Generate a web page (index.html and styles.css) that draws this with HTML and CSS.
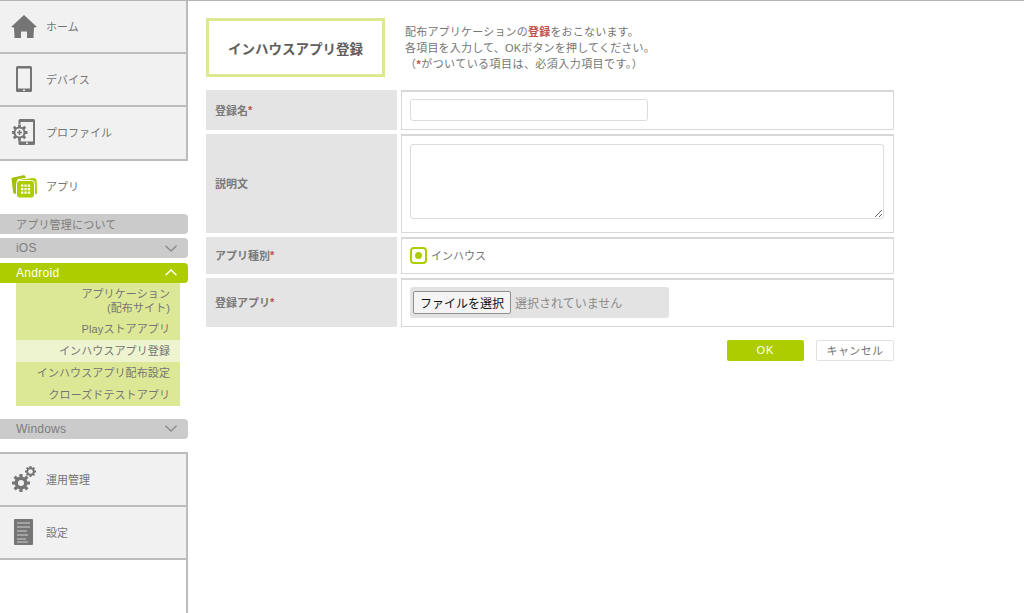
FILE: index.html
```html
<!DOCTYPE html>
<html lang="ja">
<head>
    <meta charset="UTF-8">
    <meta name="viewport" content="width=device-width, initial-scale=1.0">
    <title>インハウスアプリ登録</title>
    <link rel="stylesheet" href="styles.css">
</head>
<body>
    <div class="page">
        <!-- Sidebar -->
        <nav class="sidebar">
            <a class="nav-item">
                <span class="nav-icon">
                    <svg width="26" height="23" viewBox="0 0 26 23"><path fill="#757575" d="M13 0 L26 12 L23 12.5 L22.5 22.5 Q22.5 23 22 23 L16 23 L16 16.5 L10 16.5 L10 23 L4 23 Q3.5 23 3.5 22.5 L3 12.5 L0 12 Z"/></svg>
                </span>
                <span>ホーム</span>
            </a>
            <a class="nav-item">
                <span class="nav-icon">
                    <svg width="16" height="26" viewBox="0 0 16 26"><path fill="#757575" fill-rule="evenodd" d="M1.5 0 H14.5 Q16 0 16 1.5 V24.5 Q16 26 14.5 26 H1.5 Q0 26 0 24.5 V1.5 Q0 0 1.5 0 Z M2 2.5 V22.5 H14 V2.5 Z"/><circle cx="8" cy="24.3" r="1" fill="#f1f1f1"/></svg>
                </span>
                <span>デバイス</span>
            </a>
            <a class="nav-item">
                <span class="nav-icon">
                    <svg class="nudge-left" width="23" height="26" viewBox="0 0 23 26">
                        <path fill="#757575" fill-rule="evenodd" d="M8 0 H21.5 Q23 0 23 1.5 V24.5 Q23 26 21.5 26 H8 Q6.5 26 6.5 24.5 V21 H8.5 V22.5 H21 V3 H8.5 V5 H6.5 V1.5 Q6.5 0 8 0 Z"/>
                        <circle cx="15" cy="24.3" r="1" fill="#f1f1f1"/>
                        <circle cx="7.5" cy="13.5" r="6" fill="#757575"/>
                        <path stroke="#757575" stroke-width="2.8" d="M7.5 5.5 V21.5 M-0.5 13.5 H15.5 M1.8 7.8 L13.2 19.2 M13.2 7.8 L1.8 19.2"/>
                        <circle cx="7.5" cy="13.5" r="4" fill="#f1f1f1"/>
                        <path stroke="#757575" stroke-width="1.5" d="M7.5 11 V16 M5 13.5 H10"/>
                    </svg>
                </span>
                <span>プロファイル</span>
            </a>
            <a class="nav-item nav-item-active">
                <span class="nav-icon">
                    <svg width="27" height="23" viewBox="0 0 27 23">
                        <path fill="#a3bf0a" d="M0.5 3 L12 0.3 Q14 0 14.5 1.5 L15 3 L6 5 L5.5 19 L3 18.5 Q2 18 2 16.5 Z"/>
                        <path fill="#aecd00" stroke="#fff" d="M7 4.5 L22 2.5 Q25.5 2.2 26 5 L26.5 17.5 Q26.500 20 24 20 L8 21 Z"/>
                        <rect x="5.5" y="5.5" width="18" height="17.5" rx="3" fill="#aecd00" stroke="#fff"/>
                        <path fill="#fff" d="M10 9.5 h2.3 v2.3 h-2.3 z M13.4 9.5 h2.3 v2.3 h-2.3 z M16.8 9.5 h2.3 v2.3 h-2.3 z M10 13 h2.3 v2.3 h-2.3 z M13.4 13 h2.3 v2.3 h-2.3 z M16.8 13 h2.3 v2.3 h-2.3 z M10 16.5 h2.3 v2.3 h-2.3 z M13.4 16.5 h2.3 v2.3 h-2.3 z M16.8 16.5 h2.3 v2.3 h-2.3 z"/>
                    </svg>
                </span>
                <span>アプリ</span>
            </a>

            <div class="sub-nav">
                <a class="sub-bar sub-bar-about">アプリ管理について</a>
                <a class="sub-bar">iOS
                    <svg class="chevron" width="12" height="7" viewBox="0 0 12 7"><path fill="none" stroke="#8a8a8a" stroke-width="1.3" d="M0.5 0.7 L6 6 L11.5 0.7"/></svg>
                </a>
                <div class="platform-open">
                    <a class="sub-bar sub-bar-on">Android
                        <svg class="chevron" width="12" height="7" viewBox="0 0 12 7"><path fill="none" stroke="#fff" stroke-width="1.5" d="M0.5 6.3 L6 1 L11.5 6.3"/></svg>
                    </a>
                    <ul class="app-menu">
                        <li class="app-menu-tall">アプリケーション<br>(配布サイト)</li>
                        <li>Playストアアプリ</li>
                        <li class="current">インハウスアプリ登録</li>
                        <li>インハウスアプリ配布設定</li>
                        <li>クローズドテストアプリ</li>
                    </ul>
                </div>
                <a class="sub-bar">Windows
                    <svg class="chevron" width="12" height="7" viewBox="0 0 12 7"><path fill="none" stroke="#8a8a8a" stroke-width="1.3" d="M0.5 0.7 L6 6 L11.5 0.7"/></svg>
                </a>
            </div>

            <div class="nav-lower">
                <a class="nav-item">
                    <span class="nav-icon">
                        <svg width="24" height="26" viewBox="0 0 24 26">
                            <circle cx="9" cy="17" r="6.5" fill="#757575"/>
                            <path stroke="#757575" stroke-width="3.2" d="M9 8 V26 M0 17 H18 M2.6 10.6 L15.4 23.4 M15.4 10.6 L2.6 23.4"/>
                            <circle cx="9" cy="17" r="3" fill="#f1f1f1"/>
                            <circle cx="18.5" cy="5.5" r="4.3" fill="#757575"/>
                            <path stroke="#757575" stroke-width="2" d="M18.5 0 V11 M13 5.5 H24 M14.6 1.6 L22.4 9.4 M22.4 1.6 L14.6 9.4"/>
                            <circle cx="18.5" cy="5.5" r="2.3" fill="#f1f1f1"/>
                        </svg>
                    </span>
                    <span>運用管理</span>
                </a>
                <a class="nav-item">
                    <span class="nav-icon">
                        <svg class="nudge-left" width="19" height="26" viewBox="0 0 19 26">
                            <rect width="19" height="26" rx="1" fill="#757575"/>
                            <path stroke="#d2d2d2" stroke-width="1.2" d="M3 4 H16 M3 8 H16 M3 12 H13 M3 16 H14 M3 20 H12 M3 23 H14"/>
                        </svg>
                    </span>
                    <span>設定</span>
                </a>
            </div>
            <div class="sidebar-rest"></div>
        </nav>

        <!-- Main -->
        <main class="content">
            <header class="page-head">
                <h1 class="page-title">インハウスアプリ登録</h1>
                <p class="page-desc">
                    配布アプリケーションの<b class="req">登録</b>をおこないます。<br>
                    各項目を入力して、OKボタンを押してください。<br>
                    <span class="note">（<b class="req">*</b>がついている項目は、必須入力項目です。）</span>
                </p>
            </header>

            <form class="entry-form">
                <div class="row row-name">
                    <div class="row-label">登録名<b class="req">*</b></div>
                    <div class="row-value"><input class="text-input" type="text"></div>
                </div>
                <div class="row row-desc">
                    <div class="row-label">説明文</div>
                    <div class="row-value"><textarea class="text-area"></textarea></div>
                </div>
                <div class="row row-kind">
                    <div class="row-label">アプリ種別<b class="req">*</b></div>
                    <div class="row-value kind-value">
                        <span class="radio"><span class="radio-dot"></span></span>
                        <span>インハウス</span>
                    </div>
                </div>
                <div class="row row-file">
                    <div class="row-label">登録アプリ<b class="req">*</b></div>
                    <div class="row-value">
                        <div class="file-box">
                            <button class="file-btn" type="button">ファイルを選択</button>
                            <span class="file-none">選択されていません</span>
                        </div>
                    </div>
                </div>
                <div class="actions">
                    <button class="btn btn-ok" type="button">OK</button>
                    <button class="btn btn-cancel" type="button">キャンセル</button>
                </div>
            </form>
        </main>
    </div>
</body>
</html>
```

FILE: styles.css
```css
/* Reset */
html, body {
    margin: 0;
    padding: 0;
    height: 100%;
    overflow: hidden;
}

body {
    font-family: "Liberation Sans", "Noto Sans CJK JP", sans-serif;
    font-size: 11px;
    color: #757575;
    background: #fff;
}

.page {
    display: flex;
    height: 100%;
    box-sizing: border-box;
    border-top: 1px solid #b4b4b4;
}

/* Sidebar */
.sidebar {
    width: 188px;
    flex: none;
    display: flex;
    flex-direction: column;
}

.nav-item {
    display: flex;
    align-items: center;
    height: 53.2px;
    box-sizing: border-box;
    padding-bottom: 1px;
    background: #f1f1f1;
    border-bottom: 2px solid #bcbcbc;
    border-right: 2px solid #bcbcbc;
    color: #757575;
    font-size: 11px;
}

.nav-icon {
    display: flex;
    justify-content: center;
    align-items: center;
    width: 46px;
    flex: none;
    padding-left: 2px;
    box-sizing: border-box;
}

.nudge-left {
    margin-right: 2px;
}

.nav-item-active {
    background: #fff;
    border: 0;
    height: 52px;
}

.sub-nav {
    display: flex;
    flex-direction: column;
    gap: 4.5px;
    margin-top: 1px;
}

.sub-bar {
    display: flex;
    justify-content: space-between;
    align-items: center;
    height: 20px;
    padding: 0 11px 0 16px;
    background: #cbcbcb;
    border-radius: 0 4px 4px 0;
    color: #7d7d7d;
    font-size: 12px;
    letter-spacing: 0.2px;
}

.sub-nav .sub-bar-about {
    font-size: 11px;
}

.sub-bar-on {
    background: #aecd00;
    color: #fff;
    letter-spacing: 0.3px;
}

.platform-open {
    margin-bottom: 8.5px;
}

.app-menu {
    list-style: none;
    margin: 0 8px 0 16px;
    padding: 0;
    background: #dde897;
}

.app-menu li {
    height: 22px;
    line-height: 22px;
    padding-right: 10px;
    text-align: right;
    color: #757575;
    font-size: 11px;
    letter-spacing: 0.1px;
}

.app-menu .app-menu-tall {
    height: 35px;
    line-height: 14px;
    padding-top: 4px;
    box-sizing: border-box;
}

.app-menu .current {
    background: #eef4cf;
}

.nav-lower {
    margin-top: 13px;
    border-top: 2px solid #bcbcbc;
}

.sidebar-rest {
    flex: 1;
    border-right: 2px solid #bcbcbc;
}

/* Main */
.content {
    width: 688px;
    padding: 17px 0 0 18px;
}

.page-head {
    display: flex;
    gap: 20px;
    margin-bottom: 13px;
}

.page-title {
    width: 179px;
    height: 59px;
    flex: none;
    margin: 0;
    box-sizing: border-box;
    border: 3px solid #dde88f;
    display: flex;
    justify-content: center;
    align-items: center;
    font-size: 13.5px;
    font-weight: bold;
    color: #5e5e5e;
}

.page-desc {
    margin: 6px 0 0;
    font-size: 11px;
    line-height: 16px;
    letter-spacing: 0.2px;
}

.req {
    color: #c0504d;
}

.note {
    letter-spacing: 0.45px;
}

.row {
    display: flex;
    gap: 4px;
    margin-bottom: 4px;
}

.row-label {
    width: 191px;
    flex: none;
    display: flex;
    align-items: center;
    box-sizing: border-box;
    padding: 0 0 2px 9px;
    background: #e4e4e4;
    font-weight: bold;
    color: #7a7a7a;
}

.row-name .row-label {
    padding-bottom: 0;
}

.row-value {
    flex: 1;
    box-sizing: border-box;
    border: 1px solid #d8d8d8;
    border-width: 2px 1px 1px 1px;
    padding: 7px 9px 0 8px;
}

.row-name { height: 40px; }
.row-desc { height: 99px; }
.row-kind { height: 37px; }
.row-file { height: 49px; }

.text-input {
    display: block;
    width: 238px;
    height: 22px;
    box-sizing: border-box;
    border: 1px solid #dcdcdc;
    border-radius: 3px;
    padding: 0 4px;
    background: #fff;
    outline: none;
}

.text-area {
    display: block;
    width: 100%;
    height: 75px;
    box-sizing: border-box;
    border: 1px solid #dcdcdc;
    border-radius: 3px;
    margin-top: 1px;
    outline: none;
}

.kind-value {
    display: flex;
    align-items: center;
    gap: 4px;
    padding: 0 9px 2px 8px;
}

.radio {
    display: flex;
    justify-content: center;
    align-items: center;
    width: 17px;
    height: 17px;
    box-sizing: border-box;
    border: 2px solid #aecd00;
    border-radius: 4px;
}

.radio-dot {
    width: 7px;
    height: 7px;
    border-radius: 50%;
    background: #aecd00;
}

.file-box {
    display: flex;
    align-items: center;
    gap: 4px;
    width: 259px;
    height: 31px;
    box-sizing: border-box;
    padding-left: 3px;
    background: #e3e3e3;
    border-radius: 3px;
}

.file-btn {
    width: 98px;
    height: 23px;
    padding: 0;
    box-sizing: border-box;
    border: 1px solid #8f8f8f;
    border-radius: 2px;
    background: #f4f4f4;
    color: #111;
    font-family: inherit;
    font-size: 12px;
}

.file-none {
    font-size: 12px;
    color: #8a8a8a;
}

.actions {
    display: flex;
    justify-content: flex-end;
    gap: 12px;
    margin-top: 13px;
}

.btn {
    height: 21px;
    padding: 0 0 2px;
    box-sizing: border-box;
    font-family: inherit;
    font-size: 11px;
    border-radius: 2px;
}

.btn-ok {
    width: 77px;
    border: 0;
    background: #aecd00;
    color: #fff;
    letter-spacing: 1px;
}

.btn-cancel {
    width: 78px;
    border: 1px solid #e2e2e2;
    background: #fff;
    color: #757575;
    letter-spacing: 0.4px;
}
```
